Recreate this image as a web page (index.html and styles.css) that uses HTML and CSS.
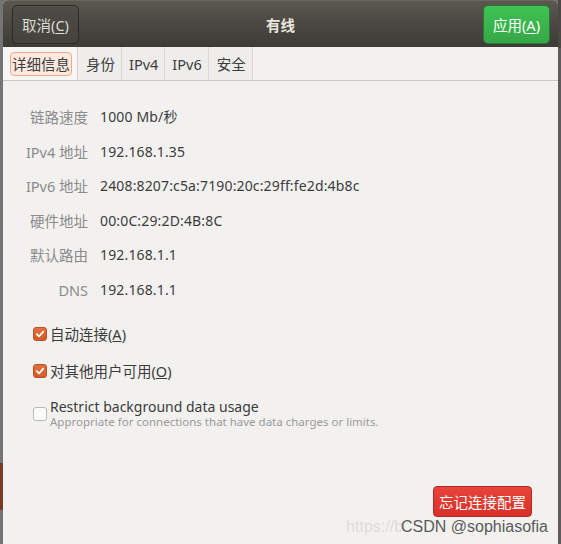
FILE: index.html
```html
<!DOCTYPE html>
<html lang="zh">
<head>
<meta charset="utf-8">
<link rel="stylesheet" href="styles.css">
</head>
<body>
<div class="screen">
  <div class="edge-left"></div>
  <div class="dialog">
    <header class="headerbar">
      <button class="btn btn-cancel">取消(<u>C</u>)</button>
      <div class="title">有线</div>
      <button class="btn btn-apply">应用(<u>A</u>)</button>
    </header>
    <nav class="tabs">
      <div class="tab active"><span class="focus">详细信息</span></div>
      <div class="tab">身份</div>
      <div class="tab tab-latin">IPv4</div>
      <div class="tab tab-latin">IPv6</div>
      <div class="tab">安全</div>
    </nav>
    <main class="content">
      <div class="details">
        <div class="label">链路速度</div><div class="value">1000 Mb/秒</div>
        <div class="label">IPv4 地址</div><div class="value">192.168.1.35</div>
        <div class="label">IPv6 地址</div><div class="value">2408:8207:c5a:7190:20c:29ff:fe2d:4b8c</div>
        <div class="label">硬件地址</div><div class="value">00:0C:29:2D:4B:8C</div>
        <div class="label">默认路由</div><div class="value">192.168.1.1</div>
        <div class="label">DNS</div><div class="value">192.168.1.1</div>
      </div>
      <div class="checks">
        <label class="check"><span class="box checked"><svg viewBox="0 0 14 14" width="14" height="14"><path d="M3.2 7.2 L5.9 9.8 L10.8 4.2" fill="none" stroke="#fff" stroke-width="2" stroke-linecap="round" stroke-linejoin="round"/></svg></span><span class="check-text">自动连接(<u>A</u>)</span></label>
        <label class="check"><span class="box checked"><svg viewBox="0 0 14 14" width="14" height="14"><path d="M3.2 7.2 L5.9 9.8 L10.8 4.2" fill="none" stroke="#fff" stroke-width="2" stroke-linecap="round" stroke-linejoin="round"/></svg></span><span class="check-text">对其他用户可用(<u>O</u>)</span></label>
        <label class="check check-multi"><span class="box"></span><span class="check-body"><span class="check-text">Restrict background data usage</span><span class="check-sub">Appropriate for connections that have data charges or limits.</span></span></label>
      </div>
      <div class="footer">
        <button class="btn btn-forget">忘记连接配置</button>
      </div>
      <div class="watermark"><span class="wm-faint">https://b</span><span class="wm-main">CSDN @sophiasofia</span></div>
    </main>
  </div>
  <div class="edge-right"></div>
</div>
</body>
</html>
```

FILE: styles.css
```css
* { box-sizing: border-box; }
html, body { margin: 0; padding: 0; }
body {
  width: 561px;
  height: 544px;
  overflow: hidden;
  font-family: "Noto Sans", "Noto Sans CJK SC", sans-serif;
  background: #6e6e6e;
}
.screen {
  display: flex;
  height: 544px;
}
.edge-left {
  width: 3px;
  background: linear-gradient(to bottom, #747474 0, #747474 463px, #7a3a26 463px, #7a3a26 510px, #747474 510px);
}
.edge-right {
  width: 3px;
  background: linear-gradient(to bottom, #4a4945 0, #4a4945 48px, #5c5c5c 48px);
}
.dialog {
  flex: 1;
  display: flex;
  flex-direction: column;
  background: #f2f1f0;
  border-radius: 5px 5px 0 0;
  overflow: hidden;
  position: relative;
}
.headerbar {
  height: 47px;
  flex: none;
  display: flex;
  align-items: center;
  justify-content: space-between;
  padding: 0 8px 0 9px;
  background: linear-gradient(to bottom, #5b5850 0, #4a4842 50%, #3d3b36 100%);
  border-top: 1px solid #6a665e;
  position: relative;
}
.btn {
  font-family: "Noto Sans", "Noto Sans CJK SC", sans-serif;
  font-size: 14.5px;
  border-radius: 5px;
  cursor: default;
  padding: 0;
}
.btn u { text-decoration-thickness: 1px; text-underline-offset: 2px; }
.btn-cancel {
  width: 67px;
  height: 39px;
  margin-top: 1px;
  color: #dcdad5;
  background: linear-gradient(to bottom, #4f4c46, #44423d);
  border: 1px solid #2b2a27;
  box-shadow: inset 0 1px 0 rgba(255,255,255,0.06);
}
.btn-apply {
  width: 67px;
  height: 39px;
  margin-top: 1px;
  color: #ffffff;
  background: linear-gradient(to bottom, #3ec353, #36a747);
  border: 1px solid #2a7a33;
}
.title {
  position: absolute;
  left: 0;
  right: 0;
  top: 0;
  bottom: 0;
  display: flex;
  align-items: center;
  justify-content: center;
  color: #e8e5de;
  font-size: 14.5px;
  font-weight: 700;
  pointer-events: none;
}
.tabs {
  height: 34px;
  flex: none;
  display: flex;
  border-bottom: 1px solid #c9c7c3;
  background: #f2f1f0;
}
.tab {
  display: flex;
  align-items: center;
  padding: 0 6px 0 8px;
  font-size: 14.5px;
  color: #3c3c3c;
  border-right: 1px solid #dad8d4;
  background: #eeedeb;
}
.tab-latin {
  padding: 0 6px 0 7px;
}
.tab.active {
  background: #f7f6f5;
  padding: 0 5px 0 7px;
  border-right: 1px solid #d3d1cd;
}
.tab .focus {
  display: inline-flex;
  align-items: center;
  height: 24px;
  padding: 0 1px;
  border: 1px solid #f3a98a;
  border-radius: 4px;
  background: #fde9e0;
}
.content {
  flex: 1;
  display: flex;
  flex-direction: column;
  padding-top: 25px;
}
.details {
  display: grid;
  grid-template-columns: 85px 1fr;
  column-gap: 12px;
  grid-auto-rows: 34.5px;
  align-items: start;
}
.label {
  text-align: right;
  color: #8b8b8b;
  font-size: 14.5px;
  line-height: 22px;
}
.value {
  color: #3c3c3c;
  font-size: 14px;
  letter-spacing: 0.15px;
  line-height: 22px;
}
.checks {
  display: flex;
  flex-direction: column;
  padding-left: 30px;
  margin-top: 2px;
}
.check {
  display: flex;
  align-items: center;
  gap: 3px;
  height: 37px;
  font-size: 14.5px;
  color: #3c3c3c;
}
.check-multi {
  align-items: flex-start;
  height: auto;
  margin-top: 10px;
}
.check-multi .box { margin-top: 8px; }
.box {
  width: 14px;
  height: 14px;
  flex: none;
  border-radius: 3px;
  border: 1px solid #bcbab6;
  background: #fbfbfa;
  display: flex;
  align-items: center;
  justify-content: center;
}
.box.checked {
  border-color: #b8502a;
  background: linear-gradient(to bottom, #e3703d, #d45a27);
}
.box svg { display: block; }
.check-body {
  display: flex;
  flex-direction: column;
}
.check-body .check-text { line-height: 16px; font-size: 14px; }
.check-sub {
  font-size: 11.5px;
  color: #9a9a9a;
  line-height: 13px;
}
.footer {
  display: flex;
  justify-content: flex-end;
  padding-right: 26px;
  margin-top: 58px;
}
.btn-forget {
  width: 99px;
  height: 31px;
  color: #ffffff;
  background: linear-gradient(to bottom, #e8443a, #d8302a);
  border: 1px solid #b02a22;
  border-radius: 4px;
  font-size: 14.5px;
}
.watermark {
  position: absolute;
  right: 10px;
  bottom: 8px;
  display: flex;
  font-family: "Liberation Sans", Arial, sans-serif;
  font-size: 16px;
  line-height: 18px;
  white-space: nowrap;
}
.wm-faint {
  color: rgba(120,120,120,0.2);
  margin-right: -2px;
}
.wm-main {
  color: #5a5a5a;
}
```
